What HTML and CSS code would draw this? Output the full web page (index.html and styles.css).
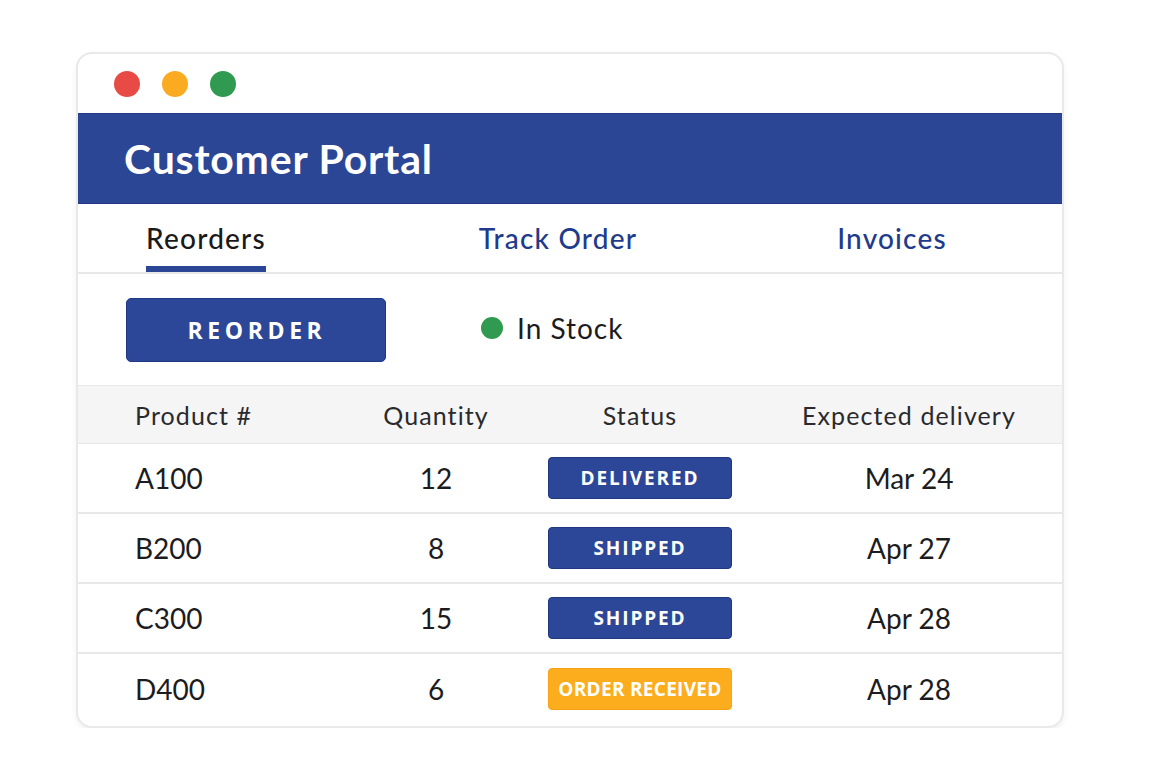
FILE: index.html
```html
<!DOCTYPE html>
<html>
<head>
    <meta charset="UTF-8">
    <title>Customer Portal</title>
    <link rel="stylesheet" href="styles.css">
</head>
<body>
    <div class="window">
        <div class="titlebar">
            <span class="dot red"></span>
            <span class="dot yellow"></span>
            <span class="dot green"></span>
        </div>

        <div class="header">
            <h1>Customer Portal</h1>
        </div>

        <div class="tabs">
            <div class="tab active tab-reorders">Reorders</div>
            <div class="tab tab-track">Track Order</div>
            <div class="tab tab-invoices">Invoices</div>
        </div>

        <div class="actions">
            <button class="reorder-btn">REORDER</button>
            <div class="stock">
                <span class="stock-dot"></span>
                <span>In Stock</span>
            </div>
        </div>

        <div class="table">
            <div class="row head">
                <div class="cell product">Product #</div>
                <div class="cell">Quantity</div>
                <div class="cell">Status</div>
                <div class="cell delivery">Expected delivery</div>
            </div>
            <div class="row">
                <div class="cell product">A100</div>
                <div class="cell">12</div>
                <div class="cell"><span class="badge">DELIVERED</span></div>
                <div class="cell delivery">Mar 24</div>
            </div>
            <div class="row">
                <div class="cell product">B200</div>
                <div class="cell">8</div>
                <div class="cell"><span class="badge">SHIPPED</span></div>
                <div class="cell delivery">Apr 27</div>
            </div>
            <div class="row">
                <div class="cell product">C300</div>
                <div class="cell">15</div>
                <div class="cell"><span class="badge">SHIPPED</span></div>
                <div class="cell delivery">Apr 28</div>
            </div>
            <div class="row last">
                <div class="cell product">D400</div>
                <div class="cell">6</div>
                <div class="cell"><span class="badge orange">ORDER RECEIVED</span></div>
                <div class="cell delivery">Apr 28</div>
            </div>
        </div>
    </div>
</body>
</html>
```

FILE: styles.css
```css
* {
    box-sizing: border-box;
}

body {
    margin: 0;
    background: #ffffff;
    font-family: 'Lato', 'Noto Sans', sans-serif;
    color: #1c1c1e;
}

.window {
    width: 988px;
    height: 676px;
    margin: 52px 0 0 76px;
    border: 2px solid #e9e9ec;
    border-radius: 16px;
    overflow: hidden;
    background: #fff;
    box-shadow: 0 3px 6px rgba(0, 0, 0, 0.06);
}

.titlebar {
    height: 59px;
    display: flex;
    align-items: center;
    gap: 22px;
    padding-left: 36px;
}

.dot {
    width: 26px;
    height: 26px;
    border-radius: 50%;
}

.red { background: #e84b45; }
.yellow { background: #fbab20; }
.green { background: #2f9a50; }

.header {
    height: 91px;
    background: #2c4696;
    border-top: 1px solid #223a86;
    border-bottom: 1px solid #223a86;
    display: flex;
    align-items: center;
    padding-left: 46px;
}

.header h1 {
    margin: 0;
    color: #fff;
    font-size: 41px;
    font-weight: 700;
    letter-spacing: 0.8px;
}

.tabs {
    height: 70px;
    display: flex;
    border-bottom: 2px solid #e8e8ea;
}

.tab {
    display: flex;
    align-items: center;
    justify-content: center;
    font-size: 28px;
    font-weight: 500;
    letter-spacing: 1.2px;
    color: #213b8c;
    white-space: nowrap;
    border-bottom: 6px solid transparent;
    padding-top: 5px;
}

.tab.active {
    color: #1a1a1a;
    border-bottom-color: #2c4696;
}

.tab-reorders {
    margin-left: 68px;
    width: 120px;
}

.tab-track {
    margin-left: 212px;
    width: 160px;
}

.tab-invoices {
    margin-left: 200px;
    width: 108px;
}

.actions {
    height: 111px;
    display: flex;
    align-items: center;
    padding-left: 48px;
}

.reorder-btn {
    width: 260px;
    height: 64px;
    background: #2c4798;
    border: 1px solid #1f3680;
    border-radius: 5px;
    color: #fff;
    font-family: 'Open Sans', 'Noto Sans', sans-serif;
    font-size: 23px;
    font-weight: 700;
    letter-spacing: 4.6px;
    padding-left: 8px;
    margin-top: 1px;
}

.stock {
    display: flex;
    align-items: center;
    gap: 14px;
    margin-left: 95px;
    font-size: 28px;
    letter-spacing: 1px;
    color: #1c1c1e;
    margin-top: -3px;
}

.stock-dot {
    width: 22px;
    height: 22px;
    border-radius: 50%;
    background: #2f9a50;
}

.row {
    display: grid;
    grid-template-columns: 252px 212px 196px 1fr;
    height: 70px;
    align-items: center;
    border-bottom: 2px solid #e8e8ea;
    font-size: 28px;
}

.row.head {
    height: 59px;
    background: #f5f5f6;
    border-top: 1px solid #e8e8ea;
    border-bottom: 1px solid #e8e8ea;
    font-size: 25px;
    letter-spacing: 1.1px;
    color: #2a2a2c;
}

.row.last {
    border-bottom: none;
}

.cell {
    text-align: center;
}

.cell.product {
    text-align: left;
    padding-left: 57px;
}

.cell.delivery {
    padding-left: 18px;
}

.badge {
    display: inline-block;
    width: 184px;
    height: 42px;
    line-height: 40px;
    background: #2c4798;
    border: 1px solid #1f3680;
    border-radius: 4px;
    color: #fff;
    font-family: 'Open Sans', 'Noto Sans', sans-serif;
    font-size: 19px;
    font-weight: 700;
    letter-spacing: 1.9px;
    vertical-align: middle;
}

.badge.orange {
    background: #fcad1e;
    border-color: #f5a314;
    letter-spacing: 0.3px;
}
```
